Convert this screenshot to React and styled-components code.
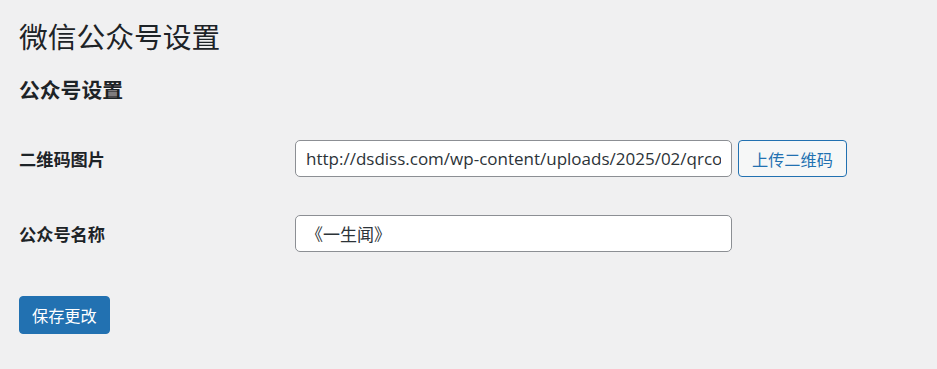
import React from 'react';
import styled, { createGlobalStyle } from 'styled-components';

const GlobalStyle = createGlobalStyle`
    html, body {
        margin: 0;
        padding: 0;
        background: #f0f0f1;
    }
    body {
        font-family: "Segoe UI", "Noto Sans", "Noto Sans CJK SC", sans-serif;
        color: #1d2327;
    }
`

const Wrap = styled.div`
    padding: 17px 20px 0 19px;
    width: 937px;
    height: 369px;
    box-sizing: border-box;
`

const Title = styled.h1`
    margin: 0;
    font-size: 28.75px;
    font-weight: 400;
    line-height: 38px;
    font-family: "Noto Sans CJK SC", sans-serif;
    color: #1d2327;
`

const Section = styled.h2`
    margin: 20px 0 0;
    font-size: 20.8px;
    font-weight: 700;
    line-height: 29px;
    font-family: "Noto Sans CJK SC", sans-serif;
    color: #1d2327;
`

const Form = styled.div`
    margin-top: 17px;
    display: flex;
    flex-direction: column;
`

const Row = styled.div`
    display: grid;
    grid-template-columns: 276px 1fr;
    align-items: center;
    height: 75px;
`

const Label = styled.div`
    font-size: 17.2px;
    font-weight: 700;
    font-family: "Noto Sans CJK SC", sans-serif;
    color: #1d2327;
`

const Field = styled.div`
    display: flex;
    align-items: center;
    gap: 6px;
`

const Input = styled.input`
    width: 437px;
    height: 37px;
    box-sizing: border-box;
    border: 1px solid #8c8f94;
    border-radius: 5px;
    background: #fff;
    padding: 0 10px;
    font-size: 17px;
    font-family: "Segoe UI", "Open Sans", "Noto Sans CJK SC", sans-serif;
    color: #2c3338;
    outline: none;
`

const Button = styled.button`
    height: ${p => p.$primary ? 38 : 37}px;
    box-sizing: border-box;
    padding: 0 ${p => p.$primary ? 12 : 13}px;
    border-radius: 4px;
    border: 1px solid #2271b1;
    background: ${p => p.$primary ? '#2271b1' : '#f6f7f7'};
    color: ${p => p.$primary ? '#fff' : '#2271b1'};
    font-size: 16.2px;
    font-family: "Noto Sans CJK SC", sans-serif;
    cursor: pointer;
`

const Submit = styled.div`
    margin-top: 25px;
`

export default function App() {
    return (
        <Wrap>
            <GlobalStyle />
            <Title>微信公众号设置</Title>
            <Section>公众号设置</Section>
            <Form>
                <Row>
                    <Label>二维码图片</Label>
                    <Field>
                        <Input defaultValue="http://dsdiss.com/wp-content/uploads/2025/02/qrcode.jpg" />
                        <Button>上传二维码</Button>
                    </Field>
                </Row>
                <Row>
                    <Label>公众号名称</Label>
                    <Field>
                        <Input defaultValue="《一生闻》" />
                    </Field>
                </Row>
            </Form>
            <Submit>
                <Button $primary>保存更改</Button>
            </Submit>
        </Wrap>
    );
}
